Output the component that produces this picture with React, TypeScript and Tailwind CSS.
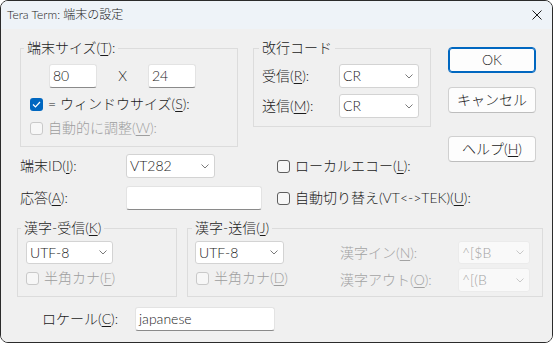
import type { ReactNode } from "react";

const M = ({ children }: { children: ReactNode }) => (
  <u className="underline-offset-[2px] decoration-1">{children}</u>
);

const Group = ({
  label,
  legend,
  className,
  children,
}: {
  label: ReactNode;
  legend: string;
  className: string;
  children?: ReactNode;
}) => (
  <div className={`border border-[#dcdcdc] ${className}`}>
    <div className={`-mt-[11px] w-fit bg-[#f0f0f0] px-[3px] leading-[20px] ${legend}`}>{label}</div>
    {children}
  </div>
);

const Edit = ({ className, value }: { className: string; value?: string }) => (
  <div
    className={`flex h-[24px] items-center rounded-[3px] border border-[#e3e3e3] border-b-[#8a8a8a] bg-white px-[3px] ${className}`}
  >
    {value}
  </div>
);

const Combo = ({
  className,
  value,
  disabled,
}: {
  className: string;
  value: string;
  disabled?: boolean;
}) => (
  <div
    className={`flex items-center justify-between rounded-[3px] border pl-[3px] pr-[5px] ${
      disabled ? "border-[#ebebeb] bg-[#f9f9f9] text-[#a3a3a3]" : "border-[#d3d3d3] bg-white"
    } ${className}`}
  >
    <span>{value}</span>
    <svg width="8" height="5" viewBox="0 0 8 5">
      <path d="M0.5 0.5 L4 4 L7.5 0.5" fill="none" stroke={disabled ? "#c8c8c8" : "#7a7a7a"} />
    </svg>
  </div>
);

const Check = ({
  checked,
  disabled,
  className = "",
  children,
}: {
  checked?: boolean;
  disabled?: boolean;
  className?: string;
  children: ReactNode;
}) => (
  <div className={`flex h-[20px] items-center gap-[5px] whitespace-nowrap ${className}`}>
    {checked ? (
      <span className="flex h-[13px] w-[13px] items-center justify-center rounded-[3px] bg-[#0067c0]">
        <svg width="9" height="7" viewBox="0 0 9 7">
          <path d="M1 3.5 L3.5 6 L8 1" fill="none" stroke="white" strokeWidth="1.2" />
        </svg>
      </span>
    ) : (
      <span
        className={`h-[13px] w-[13px] rounded-[3px] border bg-[#f7f7f7] ${
          disabled ? "border-[#c9c9c9]" : "border-[#5e5e5e]"
        }`}
      />
    )}
    <span className={disabled ? "text-[#9e9e9e]" : ""}>{children}</span>
  </div>
);

const Btn = ({ className = "", children }: { className?: string; children: ReactNode }) => (
  <div
    className={`flex h-[26px] items-center justify-center rounded-[4px] border bg-[#fdfdfd] ${className}`}
  >
    {children}
  </div>
);

export default function App() {
  return (
    <div className="h-[343px] w-[553px] bg-white">
      <div className="flex h-[343px] w-[553px] flex-col overflow-hidden rounded-[8px] border border-[#2b2b2b] font-['Lato','Noto_Sans_CJK_JP',sans-serif] text-[14px] font-light text-[#1b1b1b]">
        {/* title bar */}
        <div className="flex h-[28px] items-center justify-between bg-[#eef3f8] pl-[6px] pr-[10px] text-[12px]">
          <span>Tera Term: 端末の設定</span>
          <svg width="10" height="10" viewBox="0 0 10 10">
            <path d="M0.5 0.5 L9.5 9.5 M9.5 0.5 L0.5 9.5" stroke="#1b1b1b" strokeWidth="1" />
          </svg>
        </div>

        <div className="flex-1 bg-[#f0f0f0] pl-[16px] pt-[18px] leading-[20px]">
          <div className="flex">
            <div className="w-[431px] pl-[3px]">
              <div className="mt-[1px] flex items-start">
                <Group
                  legend="ml-[3px]"
                  className="h-[99px] w-[218px]"
                  label={
                    <>
                      端末サイズ(<M>T</M>):
                    </>
                  }
                >
                  <div className="ml-[28px] mt-[6px] flex items-center">
                    <Edit className="w-[48px]" value="80" />
                    <span className="w-[51px] text-center">X</span>
                    <Edit className="w-[48px]" value="24" />
                  </div>
                  <Check checked className="ml-[9px] mt-[6px]">
                    = ウィンドウサイズ(<M>S</M>):
                  </Check>
                  <Check disabled className="ml-[9px] mt-[4px]">
                    自動的に調整(<M>W</M>):
                  </Check>
                </Group>

                <Group
                  legend="ml-[5px]"
                  className="ml-[15px] h-[79px] w-[178px]"
                  label="改行コード"
                >
                  <div className="ml-[8px] mt-[6px] grid grid-cols-[77px_80px] items-center gap-y-[6px]">
                    <span>
                      受信(<M>R</M>):
                    </span>
                    <Combo className="h-[24px]" value="CR" />
                    <span>
                      送信(<M>M</M>):
                    </span>
                    <Combo className="h-[24px]" value="CR" />
                  </div>
                </Group>
              </div>

              <div className="mt-[7px] grid grid-cols-[106px_151px_auto] items-center gap-y-[8px]">
                <span>
                  端末ID(<M>I</M>):
                </span>
                <Combo className="h-[24px] w-[89px]" value="VT282" />
                <Check>
                  ローカルエコー(<M>L</M>):
                </Check>
                <span>
                  応答(<M>A</M>):
                </span>
                <Edit className="w-[136px]" />
                <Check>
                  自動切り替え(VT&lt;-&gt;TEK)(<M>U</M>):
                </Check>
              </div>
            </div>

            <div className="flex w-[88px] flex-col">
              <Btn className="border-[#0067c0] shadow-[inset_0_0_0_1px_#0067c0]">OK</Btn>
              <Btn className="mt-[14px] border-[#d0d0d0] border-b-[#bdbdbd]">キャンセル</Btn>
              <Btn className="mt-[23px] border-[#d0d0d0] border-b-[#bdbdbd]">
                ヘルプ(<M>H</M>)
              </Btn>
            </div>
          </div>

          <div className="mt-[18px] flex">
            <Group
              legend="ml-[3px]"
              className="h-[69px] w-[160px]"
              label={
                <>
                  漢字-受信(<M>K</M>)
                </>
              }
            >
              <Combo className="ml-[8px] mt-[3px] h-[23px] w-[87px]" value="UTF-8" />
              <Check disabled className="ml-[8px] mt-[4px]">
                半角カナ(<M>F</M>)
              </Check>
            </Group>

            <Group
              legend="ml-[4px]"
              className="ml-[10px] h-[69px] w-[356px]"
              label={
                <>
                  漢字-送信(<M>J</M>)
                </>
              }
            >
              <div className="ml-[7px] mt-[3px] grid grid-cols-[145px_118px_72px] items-center gap-y-[4px]">
                <Combo className="h-[23px] w-[89px]" value="UTF-8" />
                <span className="text-[#a3a3a3]">
                  漢字イン(<M>N</M>):
                </span>
                <Combo disabled className="h-[23px]" value="^[$B" />
                <Check disabled className="ml-[1px] self-start">
                  半角カナ(<M>D</M>)
                </Check>
                <span className="text-[#a3a3a3]">
                  漢字アウト(<M>O</M>):
                </span>
                <Combo disabled className="h-[24px]" value="^[(B" />
              </div>
            </Group>
          </div>

          <div className="mt-[10px] flex items-center pl-[25px]">
            <span className="w-[93px]">
              ロケール(<M>C</M>):
            </span>
            <Edit className="w-[140px]" value="japanese" />
          </div>
        </div>
      </div>
    </div>
  );
}
